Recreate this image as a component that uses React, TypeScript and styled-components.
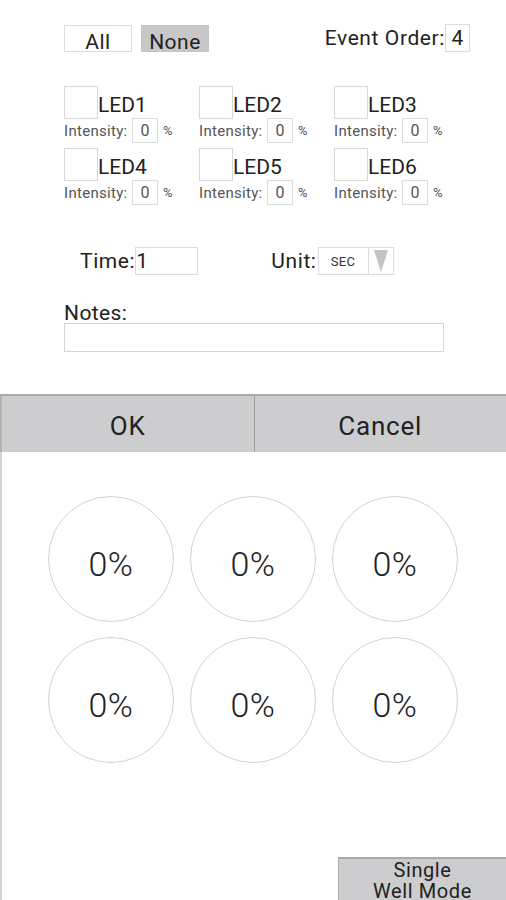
import React from "react";
import styled, { createGlobalStyle } from "styled-components";

const GlobalStyle = createGlobalStyle`
  html, body {
    margin: 0;
    padding: 0;
    background: #ffffff;
  }
  body {
    font-family: Roboto, "Liberation Sans", sans-serif;
    color: #222222;
  }
`;

const leds = ["LED1", "LED2", "LED3", "LED4", "LED5", "LED6"];
const wells = ["0%", "0%", "0%", "0%", "0%", "0%"];

const App = () => {
  return (
    <>
      <GlobalStyle />
      <Screen>
        <Form>
          <TopRow>
            <SelectButton>All</SelectButton>
            <SelectButton active>None</SelectButton>
            <Spacer />
            <Label>Event Order:</Label>
            <OrderBox>4</OrderBox>
          </TopRow>

          <LedGrid>
            {leds.map((name) => (
              <LedCell key={name}>
                <LedHeader>
                  <CheckBox />
                  <LedName>{name}</LedName>
                </LedHeader>
                <IntensityRow>
                  <SmallLabel>Intensity:</SmallLabel>
                  <IntensityBox>0</IntensityBox>
                  <Percent>%</Percent>
                </IntensityRow>
              </LedCell>
            ))}
          </LedGrid>

          <TimeRow>
            <Label>Time:</Label>
            <TimeBox>1</TimeBox>
            <UnitLabel>Unit:</UnitLabel>
            <UnitSelect>
              <UnitText>SEC</UnitText>
              <UnitArrow>
                <svg width="16" height="24" viewBox="0 0 16 24">
                  <polygon points="1,1 15,1 8,23" fill="#c4c4c4" />
                </svg>
              </UnitArrow>
            </UnitSelect>
          </TimeRow>

          <NotesLabel>Notes:</NotesLabel>
          <NotesBox />
        </Form>

        <Lower>
          <ButtonBar>
            <BarButton>OK</BarButton>
            <BarButton divider>Cancel</BarButton>
          </ButtonBar>

          <WellGrid>
            {wells.map((w, i) => (
              <Well key={i}>{w}</Well>
            ))}
          </WellGrid>

          <ModeButton>
            Single
            <br />
            Well Mode
          </ModeButton>
        </Lower>
      </Screen>
    </>
  );
};

const Screen = styled.div`
  width: 506px;
  height: 900px;
  overflow: hidden;
  display: flex;
  flex-direction: column;
  background: #ffffff;
`;

const Form = styled.div`
  padding: 24px 36px 0 64px;
  display: flex;
  flex-direction: column;
  height: 370px;
  flex-shrink: 0;
  box-sizing: border-box;
`;

const TopRow = styled.div`
  display: flex;
  align-items: center;
  height: 28px;
`;

const SelectButton = styled.div<{ active?: boolean }>`
  width: 68px;
  height: 27px;
  box-sizing: border-box;
  margin-right: 9px;
  border: 1px solid ${(p) => (p.active ? "#c4c4c4" : "#dcdcdc")};
  background: ${(p) => (p.active ? "#c8c8c8" : "#ffffff")};
  font-size: 21px;
  letter-spacing: 0.5px;
  line-height: 32px;
  text-align: center;
  color: #222222;
`;

const Spacer = styled.div`
  flex: 1;
`;

const Label = styled.span`
  font-size: 21px;
  letter-spacing: 0.6px;
  color: #222222;
`;

const OrderBox = styled.div`
  width: 25px;
  height: 28px;
  box-sizing: border-box;
  border: 1px solid #dcdcdc;
  font-size: 21px;
  line-height: 26px;
  text-align: center;
`;

const LedGrid = styled.div`
  margin-top: 34px;
  display: grid;
  grid-template-columns: repeat(3, 135px);
  row-gap: 5px;
`;

const LedCell = styled.div`
  display: flex;
  flex-direction: column;
`;

const LedHeader = styled.div`
  display: flex;
  align-items: flex-end;
  height: 33px;
`;

const CheckBox = styled.div`
  width: 34px;
  height: 33px;
  box-sizing: border-box;
  border: 1px solid #d8d8d8;
`;

const LedName = styled.span`
  font-size: 21px;
  line-height: 24px;
  margin-bottom: 2px;
  color: #222222;
`;

const IntensityRow = styled.div`
  display: flex;
  align-items: center;
  height: 25px;
  margin-top: -1px;
`;

const SmallLabel = styled.span`
  font-size: 15px;
  color: #555555;
  letter-spacing: 0.3px;
  width: 68px;
`;

const IntensityBox = styled.div`
  width: 26px;
  height: 25px;
  box-sizing: border-box;
  border: 1px solid #dcdcdc;
  font-size: 16px;
  line-height: 23px;
  text-align: center;
  color: #555555;
`;

const Percent = styled.span`
  font-size: 13px;
  color: #555555;
  margin-left: 5px;
`;

const TimeRow = styled.div`
  margin-top: 42px;
  display: flex;
  align-items: center;
  height: 28px;
  padding-left: 16px;
`;

const TimeBox = styled.div`
  width: 63px;
  height: 28px;
  box-sizing: border-box;
  border: 1px solid #dcdcdc;
  font-size: 21px;
  line-height: 26px;
  margin-right: 73px;
`;

const UnitLabel = styled(Label)`
  margin-right: 1px;
`;

const UnitSelect = styled.div`
  width: 76px;
  height: 28px;
  box-sizing: border-box;
  border: 1px solid #dcdcdc;
  display: flex;
`;

const UnitText = styled.span`
  width: 49px;
  font-size: 13px;
  line-height: 28px;
  letter-spacing: 0.4px;
  text-align: center;
  color: #333333;
  border-right: 1px solid #dcdcdc;
`;

const UnitArrow = styled.div`
  flex: 1;
  display: flex;
  align-items: center;
  justify-content: center;
`;

const NotesLabel = styled.span`
  margin-top: 28px;
  font-size: 21px;
  letter-spacing: 0.4px;
  line-height: 20px;
  color: #222222;
`;

const NotesBox = styled.div`
  width: 380px;
  height: 29px;
  box-sizing: border-box;
  border: 1px solid #d4d4d4;
`;

const Lower = styled.div`
  flex: 1;
  display: flex;
  flex-direction: column;
  margin-top: 24px;
  border-left: 2px solid #d4d4d4;
`;

const ButtonBar = styled.div`
  display: flex;
  height: 58px;
  flex-shrink: 0;
  box-sizing: border-box;
  border-top: 2px solid #a9a9a9;
  background: #cdccce;
  margin-left: -2px;
  border-left: 2px solid #b4b4b4;
`;

const BarButton = styled.div<{ divider?: boolean }>`
  flex: 1;
  display: flex;
  align-items: center;
  justify-content: center;
  padding-top: 4px;
  font-size: 26px;
  letter-spacing: 0.8px;
  color: #222222;
  border-left: ${(p) => (p.divider ? "1px solid #9e9e9e" : "none")};
`;

const WellGrid = styled.div`
  margin-top: 44px;
  padding-left: 46px;
  display: grid;
  grid-template-columns: repeat(3, 126px);
  column-gap: 16px;
  row-gap: 15px;
  flex-shrink: 0;
`;

const Well = styled.div`
  width: 126px;
  height: 126px;
  box-sizing: border-box;
  border: 1px solid #d2d2d2;
  border-radius: 50%;
  display: flex;
  align-items: center;
  justify-content: center;
  font-size: 34px;
  font-weight: 300;
  letter-spacing: 0.5px;
  color: #222222;
  padding-top: 10px;
`;

const ModeButton = styled.div`
  align-self: flex-end;
  margin-top: 94px;
  width: 168px;
  height: 56px;
  flex-shrink: 0;
  box-sizing: border-box;
  border-top: 2px solid #a9a9a9;
  border-left: 1px solid #b0b0b0;
  background: #cdccce;
  font-size: 20px;
  letter-spacing: 0.6px;
  line-height: 21px;
  text-align: center;
  padding-top: 1px;
  color: #222222;
`;

export default App;
